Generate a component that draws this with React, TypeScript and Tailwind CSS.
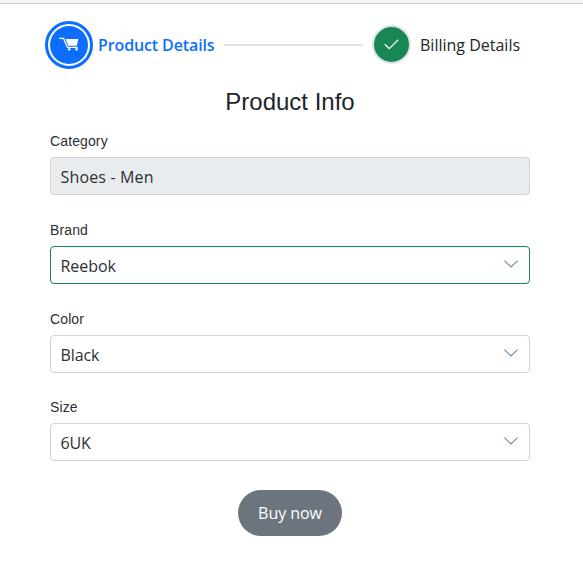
import React from "react";

const UI = "font-['Open_Sans','Noto_Sans',sans-serif]";

function Chevron() {
  return (
    <svg width="14" height="8" viewBox="0 0 14 8" fill="none" className="mb-[2px] shrink-0">
      <path d="M0.4 0.6 L7 7 L13.6 0.6" stroke="#6d8ba8" strokeWidth="1.1" />
    </svg>
  );
}

type FieldProps = {
  label: string;
  value: string;
  box: string;
  tracking: string;
  select?: boolean;
};

function Field({ label, value, box, tracking, select = true }: FieldProps) {
  return (
    <div>
      <div className="h-[26px] text-[14px] leading-5 tracking-[0.12px] text-[#2b3035]">{label}</div>
      <div
        className={`flex h-[38px] items-center justify-between rounded border pr-[11px] pl-[9.5px] text-[16px] leading-6 text-[#2b3035] ${UI} ${box}`}
      >
        <span className={`pt-[2px] ${tracking}`}>{value}</span>
        {select && <Chevron />}
      </div>
    </div>
  );
}

export default function App() {
  return (
    <div className="h-[576px] w-[583px] overflow-hidden bg-white font-['Liberation_Sans',Arial,sans-serif] text-[#212529]">
      <div className="h-1 border-b border-[#cfcfcf] bg-[#f5f5f5]" />

      <div className={`mt-4 ml-[45px] flex h-[49px] items-center text-[16px] leading-6 ${UI}`}>
        <div className="flex size-12 shrink-0 items-center justify-center rounded-full border-3 border-[#0d6efd]">
          <div className="flex size-[38px] items-center justify-center rounded-full bg-[#0d6efd]">
            <svg width="20" height="14" viewBox="0 0 20 14" className="mb-[2px]">
              <path d="M0.2 1.4H4.6L8.4 10.3H18.6" fill="none" stroke="#fff" strokeWidth="1.3" />
              <path d="M6.6 2H19.4L17.8 8.8H9.4Z" fill="#fff" />
              <circle cx="10.2" cy="12.3" r="1.3" fill="#fff" />
              <circle cx="17.6" cy="12.3" r="1.3" fill="#fff" />
            </svg>
          </div>
        </div>
        <span className="ml-[5px] w-[117px] font-semibold whitespace-nowrap text-[#0d6efd] tracking-[-0.12px]">
          Product Details
        </span>
        <div className="ml-[9px] h-[2px] w-[139px] bg-[#dee2e6]" />
        <div className="ml-[9px] flex size-[39px] shrink-0 items-center justify-center rounded-full border-2 border-[#dee2e6] bg-[#198754]">
          <svg width="15" height="11" viewBox="0 0 15 11" fill="none">
            <path d="M0.8 5.2L5.3 9.7L14.2 0.8" stroke="#fff" strokeWidth="1.3" />
          </svg>
        </div>
        <span className="ml-[9px] whitespace-nowrap">Billing Details</span>
      </div>

      <h1 className="mt-[18px] -ml-[3px] text-center text-[24px] leading-[29px]">Product Info</h1>

      <div className="mt-[15px] ml-[50px] flex w-[480px] flex-col gap-[24.75px]">
        <Field
          label="Category"
          value="Shoes - Men"
          box="border-[#ced4da] bg-[#e9ecef]"
          tracking="tracking-[0.15px]"
          select={false}
        />
        <Field label="Brand" value="Reebok" box="border-[#198754]" tracking="tracking-[-0.05px]" />
        <Field label="Color" value="Black" box="border-[#ced4da]" tracking="tracking-[-0.1px]" />
        <Field label="Size" value="6UK" box="border-[#ced4da]" tracking="tracking-[-0.2px]" />
      </div>

      <button
        className={`mt-[29px] ml-[238px] flex h-[46px] w-[104px] items-center justify-center rounded-full bg-[#6c757d] text-[16px] leading-6 text-white ${UI}`}
      >
        <span className="tracking-[-0.05px]">Buy now</span>
      </button>
    </div>
  );
}
